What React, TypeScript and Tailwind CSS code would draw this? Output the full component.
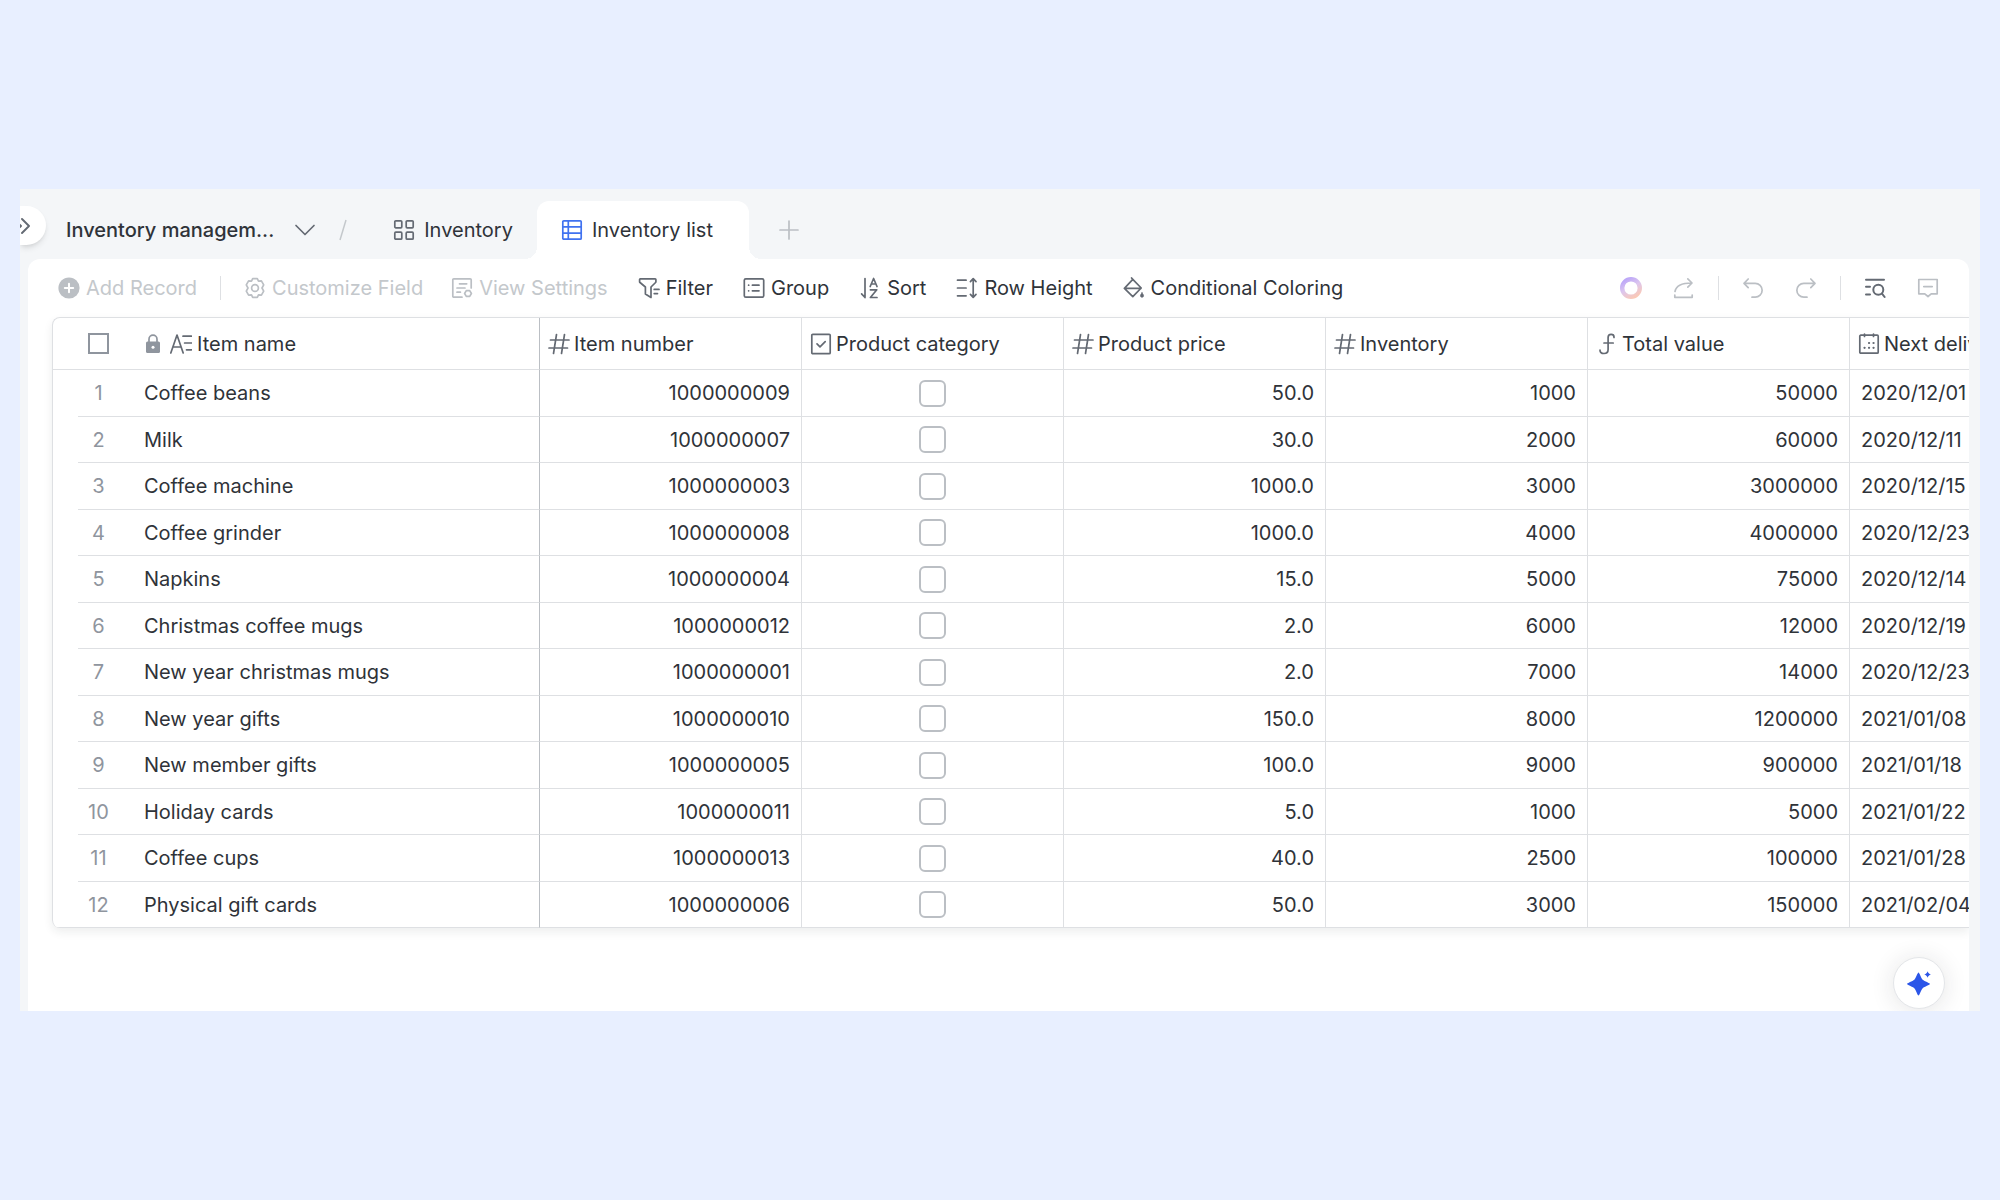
import type { ReactNode } from 'react';

const rows = [
  { name: 'Coffee beans', number: '1000000009', price: '50.0', inventory: '1000', total: '50000', delivery: '2020/12/01' },
  { name: 'Milk', number: '1000000007', price: '30.0', inventory: '2000', total: '60000', delivery: '2020/12/11' },
  { name: 'Coffee machine', number: '1000000003', price: '1000.0', inventory: '3000', total: '3000000', delivery: '2020/12/15' },
  { name: 'Coffee grinder', number: '1000000008', price: '1000.0', inventory: '4000', total: '4000000', delivery: '2020/12/23' },
  { name: 'Napkins', number: '1000000004', price: '15.0', inventory: '5000', total: '75000', delivery: '2020/12/14' },
  { name: 'Christmas coffee mugs', number: '1000000012', price: '2.0', inventory: '6000', total: '12000', delivery: '2020/12/19' },
  { name: 'New year christmas mugs', number: '1000000001', price: '2.0', inventory: '7000', total: '14000', delivery: '2020/12/23' },
  { name: 'New year gifts', number: '1000000010', price: '150.0', inventory: '8000', total: '1200000', delivery: '2021/01/08' },
  { name: 'New member gifts', number: '1000000005', price: '100.0', inventory: '9000', total: '900000', delivery: '2021/01/18' },
  { name: 'Holiday cards', number: '1000000011', price: '5.0', inventory: '1000', total: '5000', delivery: '2021/01/22' },
  { name: 'Coffee cups', number: '1000000013', price: '40.0', inventory: '2500', total: '100000', delivery: '2021/01/28' },
  { name: 'Physical gift cards', number: '1000000006', price: '50.0', inventory: '3000', total: '150000', delivery: '2021/02/04' },
];

function Icon({ children }: { children: ReactNode }) {
  return (
    <svg
      viewBox="0 0 22 22"
      className="size-[22px] shrink-0"
      fill="none"
      stroke="currentColor"
      strokeWidth="1.7"
      strokeLinecap="round"
      strokeLinejoin="round"
      aria-hidden="true"
    >
      {children}
    </svg>
  );
}

const icons = {
  expand: (
    <Icon>
      <path d="M3 5l6 6-6 6M10 4l7 7-7 7" strokeWidth="1.9" />
    </Icon>
  ),
  chevron: (
    <Icon>
      <path d="M2 6.5l9 9 9-9" />
    </Icon>
  ),
  grid: (
    <Icon>
      <rect x="1.8" y="1.8" width="7" height="7" rx="1" />
      <rect x="13.2" y="1.8" width="7" height="7" rx="1" />
      <rect x="1.8" y="13.2" width="7" height="7" rx="1" />
      <rect x="13.2" y="13.2" width="7" height="7" rx="1" />
    </Icon>
  ),
  list: (
    <Icon>
      <rect x="1.8" y="1.8" width="18.4" height="18.4" rx="1" />
      <path d="M7.3 2v18M2 7.9h18M2 14.1h18" />
    </Icon>
  ),
  plus: (
    <Icon>
      <path d="M11 2v18M2 11h18" />
    </Icon>
  ),
  add: (
    <Icon>
      <circle cx="11" cy="11" r="10.6" fill="currentColor" stroke="none" />
      <path d="M11 6.8v8.4M6.8 11h8.4" stroke="white" strokeWidth="2" />
    </Icon>
  ),
  gear: (
    <Icon>
      <path d="M8.7 1.6h4.6l1.2 2.6 2.9-.3 2.3 4L18 11l1.7 3.1-2.3 4-2.9-.3-1.2 2.6H8.7l-1.2-2.6-2.9.3-2.3-4L4 11 2.3 7.9l2.3-4 2.9.3z" />
      <circle cx="11" cy="11" r="3.4" />
    </Icon>
  ),
  viewSettings: (
    <Icon>
      <path d="M11 20.2H2.8a1 1 0 0 1-1-1V2.8a1 1 0 0 1 1-1h16.4a1 1 0 0 1 1 1V11M8.5 6.8h7.2M6 11h8M6 15.2h3.4" />
      <path d="M15.3 13.6h3.4l1.7 2.9-1.7 2.9h-3.4l-1.7-2.9z" />
    </Icon>
  ),
  filter: (
    <Icon>
      <path d="M2.3 1.8h14.8a.8.8 0 0 1 .8.8v2.2a1 1 0 0 1-.3.7L13 10v10.4l-5.600-3.300V10L2 5.500a1 1 0 0 1-.4-.7V2.600a.8.8 0 0 1 .7-.8zM16.200 12.400h4.800M16.200 16.600h3.300" />
    </Icon>
  ),
  group: (
    <Icon>
      <rect x="1.3" y="1.8" width="19.4" height="18.4" rx="1.5" />
      <path d="M5.6 8.2h.1M9.4 8.2H16M5.6 13.8h.1M9.4 13.8H16" />
    </Icon>
  ),
  sort: (
    <Icon>
      <path d="M6 1.5v19M6 20.5L2.6 16.8M11.2 9.5l3.4-8 3.4 8M12.4 7h4.4M11.4 12.8h6.4l-6.4 7.7h6.6" />
    </Icon>
  ),
  rowHeight: (
    <Icon>
      <path d="M1.5 3.2h8.6M1.5 11h8.6M1.5 18.8h8.6M17.2 1.8v18.4M14.4 4.6l2.8-3 2.8 3M14.4 17.4l2.8 3 2.8-3" />
    </Icon>
  ),
  coloring: (
    <Icon>
      <path d="M9.8 2.4l8.4 8.6-8.4 8.6L1.4 11.4zM9.8 2.4L8.6 1M1.6 11.4h16.2" />
      <path d="M19 15.8c.9 1.3 1.5 2.1 1.5 2.9a1.5 1.5 0 0 1-3 0c0-.8.6-1.6 1.5-2.9z" fill="currentColor" strokeWidth="0.8" />
    </Icon>
  ),
  ring: (
    <Icon>
      <defs>
        <linearGradient id="ring" x1="0.25" y1="0" x2="0.8" y2="1">
          <stop offset="0" stopColor="#bda8f8" />
          <stop offset="0.45" stopColor="#dcc6ee" />
          <stop offset="1" stopColor="#fbc9b6" />
        </linearGradient>
      </defs>
      <circle cx="11" cy="11" r="8.8" stroke="url(#ring)" strokeWidth="4.400" />
    </Icon>
  ),
  share: (
    <Icon>
      <path d="M2 14.5C3 8.8 8.5 6 18.8 6M14.8 1.8L19 6l-4.2 4.2M1.8 18v2.3h17.4V18" />
    </Icon>
  ),
  undo: (
    <Icon>
      <path d="M6.2 2L2 6.3l4.2 4.3M2.2 6.3h11a6.6 6.6 0 0 1 0 13.9H10" />
    </Icon>
  ),
  redo: (
    <Icon>
      <path d="M15.8 2L20 6.3l-4.2 4.3M19.8 6.3h-11a6.6 6.6 0 0 0 0 13.9H12" />
    </Icon>
  ),
  search: (
    <Icon>
      <path d="M2 2.8h18M2 9.8h4M2 17.5h4" strokeWidth="2" />
      <circle cx="14.3" cy="12.8" r="5" strokeWidth="2" />
      <path d="M18 16.6l2.6 3.4" strokeWidth="2" />
    </Icon>
  ),
  comment: (
    <Icon>
      <path d="M1.8 2.5h18.4v14.3h-6L11 19.5l-3.2-2.7h-6zM6.8 9.6h8.4" />
    </Icon>
  ),
  lock: (
    <Icon>
      <path d="M7 9V6.2a4 4 0 0 1 8 0V9" />
      <rect x="4" y="8.5" width="14" height="11.5" rx="1.5" fill="currentColor" stroke="none" />
      <circle cx="11" cy="14.2" r="1.5" fill="white" stroke="none" />
    </Icon>
  ),
  text: (
    <Icon>
      <path d="M0.8 20L7 2l6.2 18M3.2 14h7.8M13 3.2h8.5M14.6 10h6.9M16.5 16.8h5" />
    </Icon>
  ),
  hash: (
    <Icon>
      <path d="M8.5 1.5l-3 19M16.5 1.5l-3 19M2.5 7h18.5M1 15h18.5" />
    </Icon>
  ),
  checkbox: (
    <Icon>
      <rect x="1.8" y="1.3" width="18.4" height="19.4" rx="1" />
      <path d="M7 10.8l3 3 5.2-5.2" />
    </Icon>
  ),
  formula: (
    <Icon>
      <path d="M18 4.4V4c0-1.600-1.200-2.600-2.900-2.600-2 0-3 1.200-3 3.100v12c0 2.600-1.600 4-4.100 4s-4-1.300-4-3.300M8 10h9.200" />
    </Icon>
  ),
  calendar: (
    <Icon>
      <rect x="1.8" y="2.2" width="18.4" height="18" rx="1" />
      <path d="M6.5 1v2.5M15.5 1v2.5" />
      <path d="M11 10h.1M15.5 10h.1M6.5 14.8h.1M11 14.8h.1M15.5 14.8h.1" strokeWidth="2.2" />
    </Icon>
  ),
};

const columns = [
  { label: 'Item number', icon: icons.hash },
  { label: 'Product category', icon: icons.checkbox },
  { label: 'Product price', icon: icons.hash },
  { label: 'Inventory', icon: icons.hash },
  { label: 'Total value', icon: icons.formula },
  { label: 'Next delivery', icon: icons.calendar },
];

const tools = [
  { label: 'Filter', icon: icons.filter },
  { label: 'Group', icon: icons.group },
  { label: 'Sort', icon: icons.sort },
  { label: 'Row Height', icon: icons.rowHeight },
  { label: 'Conditional Coloring', icon: icons.coloring },
];

function ToolButton({ icon, label, disabled }: { icon: ReactNode; label: string; disabled?: boolean }) {
  return (
    <button
      type="button"
      disabled={disabled}
      className="flex items-center gap-[6px] whitespace-nowrap text-[#2f3339] disabled:text-[#c4c8cc]"
    >
      <span className={disabled ? 'text-[#bbbfc4]' : 'text-[#646a73]'}>{icon}</span>
      {label}
    </button>
  );
}

function Divider() {
  return <span className="h-6 w-px bg-[#dee0e3]" />;
}

function TabBar() {
  return (
    <header className="flex h-[70px] pt-3 text-[#2f3339]">
      <button
        type="button"
        aria-label="Expand sidebar"
        className="mt-[5px] flex h-[39px] w-[26px] items-center justify-end overflow-hidden rounded-r-full bg-white pr-3 text-[#646a73] shadow-md"
      >
        {icons.expand}
      </button>
      <button type="button" className="ml-5 flex items-center gap-5 font-medium">
        Inventory managem...
        <span className="text-[#646a73]">{icons.chevron}</span>
      </button>
      <span className="ml-[23px] flex items-center text-[#c4c8cc]">
        <svg viewBox="0 0 8 22" className="h-[22px] w-2" stroke="currentColor" strokeWidth="1.5" aria-hidden="true">
          <path d="M7 1L1 21" />
        </svg>
      </span>
      <nav className="ml-6 flex">
        <a href="#inventory" className="flex items-center gap-[9px] pr-6 pl-[22px]">
          <span className="text-[#646a73]">{icons.grid}</span>
          Inventory
        </a>
        <a
          href="#inventory-list"
          aria-current="page"
          className="relative flex w-[212px] items-center gap-[9px] rounded-t-xl bg-white pl-6 before:absolute before:bottom-0 before:-left-3 before:size-3 before:bg-[radial-gradient(circle_at_0_0,transparent_12px,white_12px)] after:absolute after:-right-3 after:bottom-0 after:size-3 after:bg-[radial-gradient(circle_at_100%_0,transparent_12px,white_12px)]"
        >
          <span className="text-[#4072f0]">{icons.list}</span>
          Inventory list
        </a>
      </nav>
      <button type="button" aria-label="Add view" className="ml-[29px] text-[#bbbfc4]">
        {icons.plus}
      </button>
    </header>
  );
}

function Toolbar() {
  return (
    <div className="flex h-[58px] items-center px-[30px]">
      <div className="flex items-center gap-[23px]">
        <ToolButton icon={icons.add} label="Add Record" disabled />
        <Divider />
        <ToolButton icon={icons.gear} label="Customize Field" disabled />
      </div>
      <div className="ml-7 flex items-center gap-[30px]">
        <ToolButton icon={icons.viewSettings} label="View Settings" disabled />
        {tools.map((tool) => (
          <ToolButton key={tool.label} icon={tool.icon} label={tool.label} />
        ))}
      </div>
      <div className="ml-auto flex items-center gap-[31px] text-[#bbbfc4]">
        <button type="button" aria-label="Assistant">{icons.ring}</button>
        <div className="flex items-center gap-[23px]">
          <button type="button" aria-label="Share">{icons.share}</button>
          <Divider />
          <button type="button" aria-label="Undo">{icons.undo}</button>
        </div>
        <div className="flex items-center gap-[23px]">
          <button type="button" aria-label="Redo">{icons.redo}</button>
          <Divider />
          <button type="button" aria-label="Search" className="text-[#646a73]">{icons.search}</button>
        </div>
        <button type="button" aria-label="Comments">{icons.comment}</button>
      </div>
    </div>
  );
}

function InventoryTable() {
  const line = 'border-b border-r border-[#dee0e3]';
  return (
    <div className="ml-6 overflow-hidden rounded-l-lg border-t border-l border-[#dee0e3] shadow-[0_4px_10px_rgba(31,35,41,0.08)]">
      <table className="w-[2059px] table-fixed border-separate border-spacing-0 whitespace-nowrap text-[#2f3339]">
        <colgroup>
          <col className="w-[25px]" />
          <col className="w-[41px]" />
          <col className="w-[421px]" />
          {columns.map((column) => (
            <col key={column.label} className="w-[262px]" />
          ))}
        </colgroup>
        <thead>
          <tr className="h-[52px]">
            <td className="border-b border-[#dee0e3]" />
            <th className="border-b border-[#dee0e3] font-normal">
              <input
                type="checkbox"
                aria-label="Select all records"
                className="mx-auto block size-[21px] appearance-none border-2 border-[#8f959e]"
              />
            </th>
            <th className="border-r border-b border-[#dee0e3] border-r-[#bbbfc4] pl-[23px] text-left font-normal">
              <span className="flex items-center">
                <span className="mr-[6px] text-[#8f959e]">{icons.lock}</span>
                <span className="mr-[5px] text-[#646a73]">{icons.text}</span>
                Item name
              </span>
            </th>
            {columns.map((column) => (
              <th key={column.label} className={`${line} pl-2 text-left font-normal`}>
                <span className="flex items-center gap-1">
                  <span className="text-[#646a73]">{column.icon}</span>
                  {column.label}
                </span>
              </th>
            ))}
          </tr>
        </thead>
        <tbody>
          {rows.map((row, i) => (
            <tr key={row.number} className="odd:h-[47px] even:h-[46px]">
              <td className={i === rows.length - 1 ? 'border-b border-[#dee0e3]' : ''} />
              <td className="border-b border-[#dee0e3] text-center text-[#8f959e]">{i + 1}</td>
              <td className="border-r border-b border-[#dee0e3] border-r-[#bbbfc4] pl-[25px]">{row.name}</td>
              <td className={`${line} pr-[11px] text-right`}>{row.number}</td>
              <td className={line}>
                <input
                  type="checkbox"
                  aria-label={`Product category of ${row.name}`}
                  className="mx-auto block size-[27px] appearance-none rounded-md border-2 border-[#bbbfc4]"
                />
              </td>
              <td className={`${line} pr-[11px] text-right`}>{row.price}</td>
              <td className={`${line} pr-[11px] text-right`}>{row.inventory}</td>
              <td className={`${line} pr-[11px] text-right`}>{row.total}</td>
              <td className={`${line} pl-[11px]`}>{row.delivery}</td>
            </tr>
          ))}
        </tbody>
      </table>
    </div>
  );
}

export default function App() {
  return (
    <main className="flex min-h-screen items-center bg-[#e8efff] px-5 font-['Inter','Liberation_Sans',sans-serif] text-[20px] leading-6">
      <div className="relative w-full overflow-hidden bg-[#f4f6f8]">
        <TabBar />
        <section className="mr-[11px] ml-2 overflow-hidden rounded-t-xl bg-white pb-[83px]">
          <Toolbar />
          <InventoryTable />
        </section>
        <button
          type="button"
          aria-label="Open AI assistant"
          className="absolute right-[35px] bottom-[2px] flex size-[52px] items-center justify-center rounded-full border border-[#e4e6e9] bg-white text-[#2b55e8] shadow-[0_2px_24px_rgba(31,35,41,0.12)]"
        >
          <svg viewBox="0 0 26 26" className="size-[26px]" fill="currentColor" aria-hidden="true">
            <path d="M12.500 2.500c.9 0 2.600 5.600 4.200 7.300 1.700 1.600 7.300 3.300 7.300 4.200s-5.600 2.600-7.300 4.200c-1.600 1.700-3.300 7.300-4.200 7.300s-2.600-5.600-4.200-7.300C6.600 16.600 1 14.900 1 14s5.600-2.600 7.300-4.200c1.600-1.700 3.300-7.300 4.200-7.300z" />
            <path d="M21.600 1.200c.7 1.900 1.400 2.600 3.300 3.300-1.900.7-2.600 1.400-3.300 3.300-.7-1.900-1.400-2.600-3.300-3.300 1.900-.7 2.600-1.400 3.300-3.300z" />
          </svg>
        </button>
      </div>
    </main>
  );
}
